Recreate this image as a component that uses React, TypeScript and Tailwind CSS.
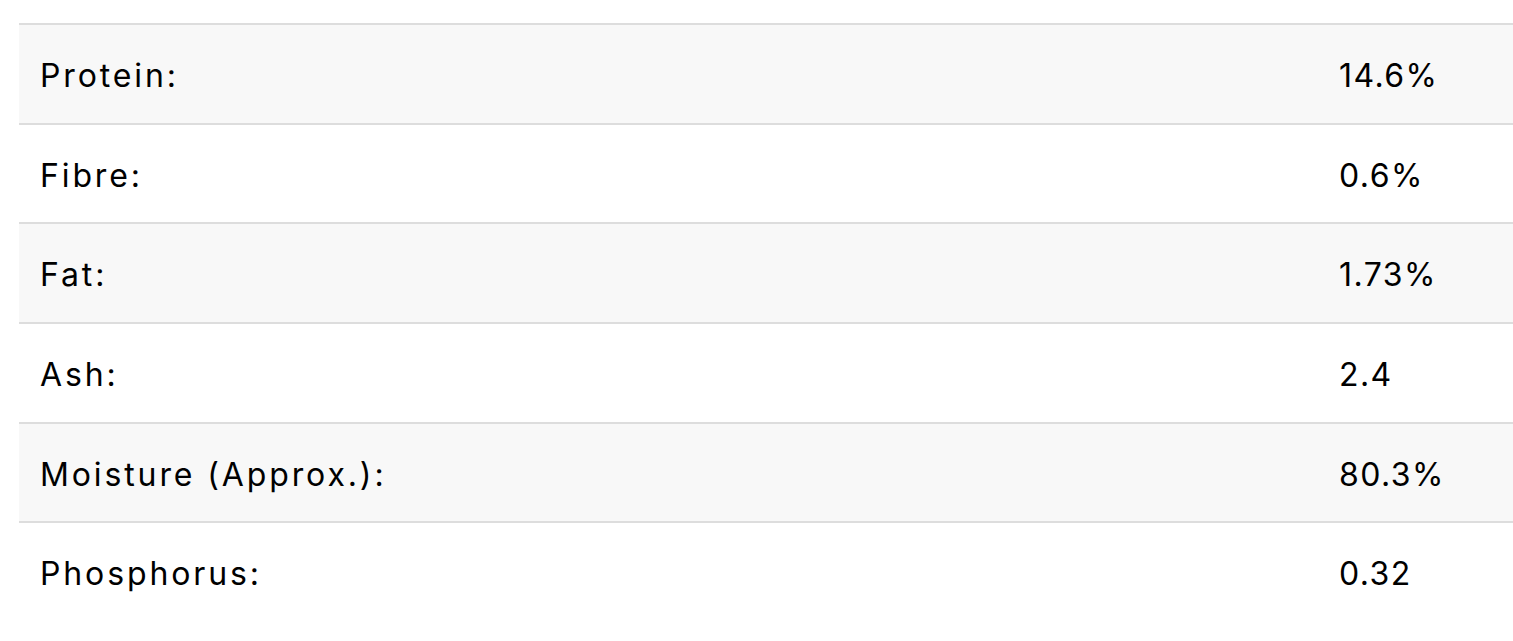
import React from "react";

const rows: [string, string][] = [
  ["Protein:", "14.6%"],
  ["Fibre:", "0.6%"],
  ["Fat:", "1.73%"],
  ["Ash:", "2.4"],
  ["Moisture (Approx.):", "80.3%"],
  ["Phosphorus:", "0.32"],
];

export default function App() {
  return (
    <div className="w-[1513px] h-[641px] overflow-hidden bg-white pt-[23px] pl-[19px]" style={{ fontFamily: "Inter, sans-serif" }}>
      <div className="flex flex-col">
        {rows.map(([k, v], i) => (
          <div
            key={k}
            className={`flex items-center h-[99.7px] pt-[4px] border-t-2 border-[#dddddd] text-[32px] text-black ${i % 2 === 0 ? "bg-[#f8f8f8]" : "bg-white"}`}
          >
            <div className="w-[1320px] pl-[21px] tracking-[0.09em]">{k}</div>
            <div className="flex-1 tracking-[0.045em]">{v}</div>
          </div>
        ))}
      </div>
    </div>
  );
}
